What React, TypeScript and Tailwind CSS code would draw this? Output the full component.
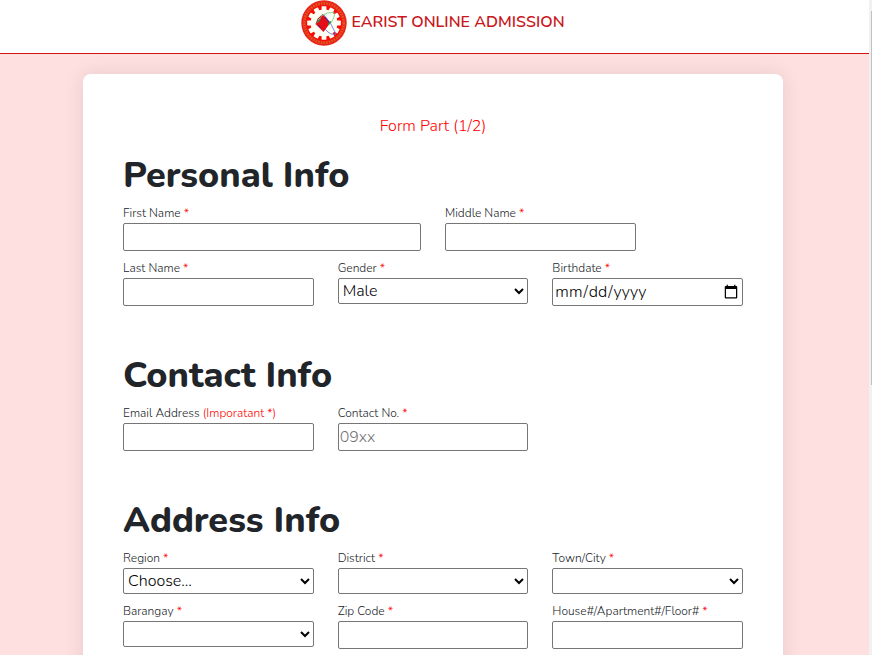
import React, { useId } from "react";

const fieldBox =
  "block w-full rounded-[2px] border border-[#767676] bg-white text-[16px] text-black";

type FieldProps = {
  label: string;
  note?: string;
  span?: string;
  type?: string;
  placeholder?: string;
  options?: string[];
};

function Field({
  label,
  note = "*",
  span = "col-span-4",
  type = "text",
  placeholder,
  options,
}: FieldProps) {
  const id = useId();
  return (
    <div className={span}>
      <label
        htmlFor={id}
        className="block pt-2 pb-px text-[12px] leading-[18px] whitespace-nowrap text-[#212529]"
      >
        {label} <span className="text-[#ff0000]">{note}</span>
      </label>
      {options ? (
        <select id={id} className={`${fieldBox} h-[26px]`}>
          {options.map((option) => (
            <option key={option}>{option}</option>
          ))}
        </select>
      ) : (
        <input
          id={id}
          type={type}
          placeholder={placeholder}
          className={`${fieldBox} h-7 px-px placeholder:text-[#757575]`}
        />
      )}
    </div>
  );
}

function Section({ title, children }: { title: string; children: React.ReactNode }) {
  return (
    <section className="mb-[50px]">
      <h1 className="text-[36px] leading-10 font-extrabold text-[#212529]">{title}</h1>
      <div className="grid grid-cols-12 gap-x-6">{children}</div>
    </section>
  );
}

function Seal() {
  const teeth = Array.from({ length: 12 }, (_, i) => i * 30);
  return (
    <svg viewBox="0 0 46 46" className="size-[46px]" role="img" aria-label="EARIST seal">
      <circle cx="23" cy="23" r="22.7" fill="#e8231b" />
      <circle cx="23" cy="23" r="19.7" fill="none" stroke="#e2561c" strokeWidth="2.6" strokeDasharray="1.6 1.1" />
      <circle cx="23" cy="23" r="17.8" fill="#f90a04" />
      <g fill="#fffef4">
        {teeth.map((angle) => (
          <rect key={angle} x="20.6" y="6.2" width="4.8" height="7" rx="0.6" transform={`rotate(${angle} 23 23)`} />
        ))}
        <circle cx="23" cy="23" r="13.4" />
      </g>
      <path d="M22 14.5 29.5 22.5 22.5 32 15 24.5Z" fill="#e60d16" />
      <path d="M15 24.5 17 19 22 14.5" fill="none" stroke="#9a3a2a" strokeWidth="1.2" />
      <path d="M20 16 Q27 11.5 33 12.5 Q35 17 28 25" fill="none" stroke="#7ccf88" strokeWidth="0.9" />
      <path d="M23 15 Q30 22 35 34 Q30 36 24 29" fill="none" stroke="#6b76ea" strokeWidth="0.9" />
      <path d="M24 17 28.5 23M17 25l3 3" stroke="#3a2a9c" strokeWidth="1" />
      <path d="M16.5 22l3-3M27 24.5l3-3" stroke="#219447" strokeWidth="1.2" />
    </svg>
  );
}

export default function App() {
  return (
    <div className="flex h-screen overflow-hidden bg-[#ffe0e0] font-[Nunito,Lato,sans-serif]">
      <div className="min-w-0 flex-1">
        <header className="flex h-[54px] justify-center border-b border-[#d0140f] bg-white pr-[3px]">
          <a href="#" className="flex h-[46px] items-center gap-1 text-[16px] font-semibold text-[#c9161b]">
            <Seal />
            <span className="pb-0.5">EARIST ONLINE ADMISSION</span>
          </a>
        </header>
        <main className="pt-5 pr-[3px]">
          <form className="mx-auto max-w-[700px] rounded-[8px] bg-white px-10 pt-10 pb-10 font-light shadow-[0_0_20px_rgba(0,0,0,0.1)]">
            <p className="mb-[18px] text-center text-[16px] leading-6 text-[#ff0000]">Form Part (1/2)</p>
            <Section title="Personal Info">
              <Field label="First Name" span="col-span-6" />
              <Field label="Middle Name" />
              <Field label="Last Name" />
              <Field label="Gender" options={["Male", "Female"]} />
              <Field label="Birthdate" type="date" />
            </Section>
            <Section title="Contact Info">
              <Field label="Email Address" note="(Imporatant *)" />
              <Field label="Contact No." placeholder="09xx" />
            </Section>
            <Section title="Address Info">
              <Field label="Region" options={["Choose..."]} />
              <Field label="District" options={[""]} />
              <Field label="Town/City" options={[""]} />
              <Field label="Barangay" options={[""]} />
              <Field label="Zip Code" />
              <Field label="House#/Apartment#/Floor#" />
            </Section>
          </form>
        </main>
      </div>
      <div className="w-[3px] bg-[#f1f1f1] pt-[11px] pl-[2px]" aria-hidden="true">
        <div className="h-[374px] bg-[#c1c1c1]" />
      </div>
    </div>
  );
}
